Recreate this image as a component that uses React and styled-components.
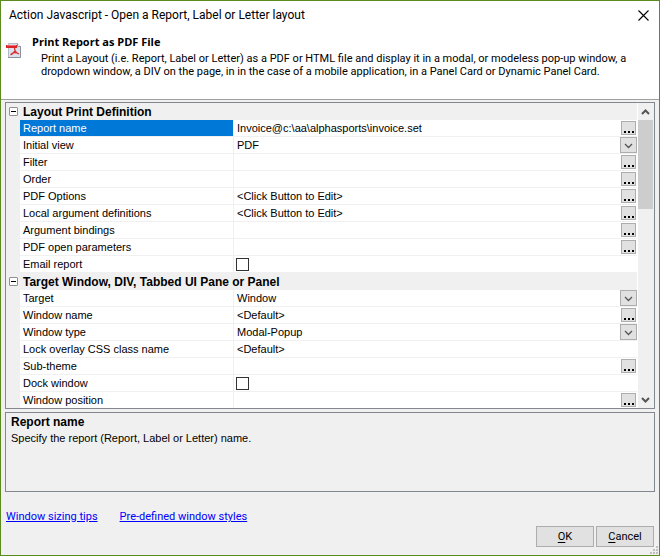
import React, { useState } from "react";
import styled, { createGlobalStyle, css } from "styled-components";

const GlobalStyle = createGlobalStyle`
  * { box-sizing: border-box; }
  body { margin: 0; background: #f0f0f0; }
  button, input, select { font: inherit; color: inherit; margin: 0; }
`;

const uiFont = `Roboto, "Noto Sans", sans-serif`;

const Dialog = styled.main`
  display: flex;
  flex-direction: column;
  height: 100vh;
  border: 1px solid #5b8a1f;
  background: #f0f0f0;
  color: #000;
  font: 11px/13px "Liberation Sans", Arial, sans-serif;
`;

const Header = styled.header`
  height: 99px;
  flex: none;
  background: #fff;
  border-bottom: 1px solid #a0a0a0;
`;

const TitleBar = styled.div`
  display: flex;
  align-items: center;
  justify-content: space-between;
  height: 28px;
  padding: 0 8px;
`;

const Title = styled.h1`
  margin: 0;
  font: 400 12px/16px ${uiFont};
`;

const CloseButton = styled.button`
  display: flex;
  padding: 2px;
  border: 0;
  background: none;
`;

const Intro = styled.div`
  display: flex;
  gap: 10px;
  padding: 6px 5px 0;
`;

const IntroIcon = styled.svg`
  flex: none;
  margin-top: 8px;
`;

const IntroTitle = styled.h2`
  margin: 0;
  font: 700 11px/14px "Open Sans", "Noto Sans", sans-serif;
`;

const IntroText = styled.p`
  margin: 3px 0 0;
  padding-left: 9px;
  font: 11px/13px ${uiFont};
`;

const Body = styled.div`
  display: flex;
  flex-direction: column;
  gap: 3px;
  flex: 1;
  min-height: 0;
  padding: 2px 4px 0;
`;

const GridFrame = styled.section`
  display: flex;
  flex: 1;
  min-height: 0;
  border: 1px solid #828790;
`;

const GridView = styled.div`
  flex: 1;
  min-width: 0;
  overflow: hidden;
`;

const PropertyTable = styled.table`
  width: 100%;
  table-layout: fixed;
  border-collapse: separate;
  border-spacing: 0;
`;

const GutterCol = styled.col` width: 14px; `;
const NameCol = styled.col` width: 214px; `;

const Gutter = styled.td`
  padding: 0;
  text-align: center;
  background: #f0f0f0;
`;

const SectionName = styled.th`
  height: 17px;
  padding: 0 0 0 3px;
  text-align: left;
  font: 700 12px/16px "Liberation Sans", Arial, sans-serif;
`;

const Toggle = styled.button`
  display: block;
  width: 9px;
  height: 9px;
  margin: 0 auto;
  padding: 3px 1px;
  border: 1px solid #919191;
  border-radius: 1px;
  background: #fff;

  &::before {
    content: "";
    display: block;
    height: 1px;
    background: #000;
  }
`;

const NameCell = styled.th`
  height: 17px;
  padding: 0 0 0 3px;
  border-right: 1px solid #f0f0f0;
  border-bottom: 1px solid #f0f0f0;
  text-align: left;
  font-weight: 400;
  line-height: 16px;
  background: ${(p) => (p.$selected ? "#0078d7" : "#fff")};
  color: ${(p) => (p.$selected ? "#fff" : "#000")};
`;

const ValueCell = styled.td`
  height: 17px;
  padding: 0;
  border-bottom: 1px solid #f0f0f0;
  background: #fff;
`;

const ValueRow = styled.div`
  display: flex;
  align-items: center;
  height: 16px;
  padding: 0 ${(p) => (p.$flush ? 0 : 1)}px 0 3px;
`;

const fieldStyle = css`
  flex: 1;
  min-width: 0;
  width: 100%;
  height: 16px;
  padding: 0;
  border: 0;
  border-radius: 0;
  outline: 0;
  background: transparent;
  line-height: 16px;
`;

const TextField = styled.input`${fieldStyle}`;

const SelectField = styled.select`
  ${fieldStyle}
  appearance: none;
`;

const CheckField = styled.input`
  appearance: none;
  width: 13px;
  height: 13px;
  margin: 0 0 0 -1px;
  border: 1px solid #333;
  background: #fff;

  &:checked { background: #333; box-shadow: inset 0 0 0 2px #fff; }
`;

const EllipsisButton = styled.button`
  display: flex;
  align-items: flex-end;
  justify-content: center;
  flex: none;
  width: 15px;
  height: 14px;
  padding: 0;
  border: 1px solid #adadad;
  background: #e1e1e1;
`;

const DropMark = styled.span`
  display: flex;
  align-items: center;
  justify-content: center;
  flex: none;
  width: 17px;
  height: 16px;
  padding-top: 2px;
  border: 1px solid #adadad;
  background: #e1e1e1;
  pointer-events: none;
`;

const ScrollBar = styled.div`
  display: flex;
  flex-direction: column;
  flex: none;
  width: 17px;
  padding: 0 1px 0 0;
  border-left: 1px solid #fff;
  background: #f0f0f0;
`;

const ScrollButton = styled.button`
  display: flex;
  align-items: center;
  justify-content: center;
  height: 17px;
  flex: none;
  padding: 0;
  border: 0;
  background: none;
`;

const ScrollTrack = styled.div` flex: 1; `;

const ScrollThumb = styled.div`
  height: 33%;
  background: #cdcdcd;
`;

const HelpPane = styled.section`
  flex: none;
  height: 80px;
  padding: 2px 5px;
  border: 1px solid #828790;
`;

const HelpTitle = styled.h3`
  margin: 0;
  font: 700 12px/15px "Liberation Sans", Arial, sans-serif;
`;

const HelpText = styled.p`
  margin: 0;
  line-height: 16px;
`;

const Footer = styled.footer`
  flex: none;
  display: flex;
  justify-content: space-between;
  height: 63px;
  padding: 0 5px 8px 5px;
  font: 11px/13px ${uiFont};
`;

const Links = styled.nav`
  display: flex;
  gap: 22px;
  padding-top: 18px;
`;

const Link = styled.a` color: #00f; `;

const Actions = styled.div`
  display: flex;
  align-items: flex-end;
  gap: 2px;
`;

const ActionButton = styled.button`
  width: 58px;
  height: 21px;
  padding: 0;
  border: 1px solid #adadad;
  background: #e1e1e1;

  u { text-underline-offset: 2px; }
`;

const Grip = styled.svg`
  position: absolute;
  right: 2px;
  bottom: 2px;
`;

const sections = [
  {
    name: "Layout Print Definition",
    rows: [
      { name: "Report name", value: "Invoice@c:\\aa\\alphasports\\invoice.set", kind: "edit", selected: true },
      { name: "Initial view", value: "PDF", kind: "select" },
      { name: "Filter", value: "", kind: "edit" },
      { name: "Order", value: "", kind: "edit" },
      { name: "PDF Options", value: "<Click Button to Edit>", kind: "edit" },
      { name: "Local argument definitions", value: "<Click Button to Edit>", kind: "edit" },
      { name: "Argument bindings", value: "", kind: "edit" },
      { name: "PDF open parameters", value: "", kind: "edit" },
      { name: "Email report", kind: "check" },
    ],
  },
  {
    name: "Target Window, DIV, Tabbed UI Pane or Panel",
    rows: [
      { name: "Target", value: "Window", kind: "select" },
      { name: "Window name", value: "<Default>", kind: "edit" },
      { name: "Window type", value: "Modal-Popup", kind: "select" },
      { name: "Lock overlay CSS class name", value: "<Default>", kind: "text" },
      { name: "Sub-theme", value: "", kind: "edit" },
      { name: "Dock window", kind: "check" },
      { name: "Window position", value: "", kind: "edit" },
    ],
  },
];

function Dots() {
  return (
    <svg width="11" height="4" viewBox="0 0 11 4" aria-hidden="true">
      <path d="M1 1h2v2H1zM5 1h2v2H5zM9 1h2v2H9z" fill="#000" />
    </svg>
  );
}

function Chevron({ up, bold }) {
  return (
    <svg width="9" height="6" viewBox="0 0 9 6" aria-hidden="true">
      <path
        d={up ? "M1 5l3.5-3.5L8 5" : "M1 1l3.5 3.5L8 1"}
        fill="none"
        stroke="#555"
        strokeWidth={bold ? 2 : 1.3}
      />
    </svg>
  );
}

function PdfIcon() {
  return (
    <IntroIcon width="16" height="16" viewBox="0 0 16 16" aria-hidden="true">
      <path d="M2.5.5h9l3 3v11h-12z" fill="#dde2ea" stroke="#b4b9c3" />
      <path d="M14.5 3v11.5H2" fill="none" stroke="#8a90a0" />
      <path d="M11.5.5v3h3" fill="#fff" stroke="#9299a6" />
      <path d="M0 2h11v3H0z" fill="#d9252a" />
      <path d="M1 2.5h9" stroke="#ee6a6a" />
      <path
        d="M8.5 5c1 2.500-1 5.500-4 7M8.500 5c0 3 1.500 5 4.500 6M5 11c2-1.500 5-2 8 0"
        fill="none"
        stroke="#d83035"
        strokeWidth="1.3"
      />
    </IntroIcon>
  );
}

function Property({ row }) {
  const id = row.name.toLowerCase().replace(/\W+/g, "-");
  return (
    <tr>
      <Gutter />
      <NameCell scope="row" $selected={row.selected}>
        <label htmlFor={id}>{row.name}</label>
      </NameCell>
      <ValueCell>
        <ValueRow $flush={row.kind === "select"}>
          {row.kind === "check" && <CheckField id={id} type="checkbox" />}
          {(row.kind === "edit" || row.kind === "text") && (
            <TextField id={id} type="text" defaultValue={row.value} />
          )}
          {row.kind === "edit" && (
            <EllipsisButton type="button" aria-label={`Edit ${row.name}`}>
              <Dots />
            </EllipsisButton>
          )}
          {row.kind === "select" && (
            <>
              <SelectField id={id} defaultValue={row.value}>
                <option>{row.value}</option>
              </SelectField>
              <DropMark><Chevron /></DropMark>
            </>
          )}
        </ValueRow>
      </ValueCell>
    </tr>
  );
}

function Section({ section }) {
  const [open, setOpen] = useState(true);
  return (
    <tbody>
      <tr>
        <Gutter>
          <Toggle
            type="button"
            aria-label={`Toggle ${section.name}`}
            aria-expanded={open}
            onClick={() => setOpen(!open)}
          />
        </Gutter>
        <SectionName colSpan={2}>{section.name}</SectionName>
      </tr>
      {open && section.rows.map((row) => <Property key={row.name} row={row} />)}
    </tbody>
  );
}

export default function App() {
  return (
    <>
      <GlobalStyle />
      <Dialog>
        <Header>
          <TitleBar>
            <Title>Action Javascript - Open a Report, Label or Letter layout</Title>
            <CloseButton type="button" aria-label="Close">
              <svg width="11" height="11" viewBox="0 0 11 11" aria-hidden="true">
                <path d="M.5.5l10 10M10.5.5l-10 10" stroke="#000" strokeWidth="1.1" />
              </svg>
            </CloseButton>
          </TitleBar>
          <Intro>
            <PdfIcon />
            <div>
              <IntroTitle>Print Report as PDF File</IntroTitle>
              <IntroText>
                Print a Layout (i.e. Report, Label or Letter) as a PDF or HTML file and display it in a
                modal, or modeless pop-up window, a<br />
                dropdown window, a DIV on the page, in in the case of a mobile application, in a Panel
                Card or Dynamic Panel Card.
              </IntroText>
            </div>
          </Intro>
        </Header>
        <Body>
          <GridFrame>
            <GridView>
              <PropertyTable>
                <colgroup><GutterCol /><NameCol /><col /></colgroup>
                {sections.map((s) => <Section key={s.name} section={s} />)}
              </PropertyTable>
            </GridView>
            <ScrollBar>
              <ScrollButton type="button" aria-label="Scroll up"><Chevron up bold /></ScrollButton>
              <ScrollTrack><ScrollThumb /></ScrollTrack>
              <ScrollButton type="button" aria-label="Scroll down"><Chevron bold /></ScrollButton>
            </ScrollBar>
          </GridFrame>
          <HelpPane>
            <HelpTitle>Report name</HelpTitle>
            <HelpText>Specify the report (Report, Label or Letter) name.</HelpText>
          </HelpPane>
        </Body>
        <Footer>
          <Links>
            <Link href="#sizing">Window sizing tips</Link>
            <Link href="#styles">Pre-defined window styles</Link>
          </Links>
          <Actions>
            <ActionButton type="button"><u>O</u>K</ActionButton>
            <ActionButton type="button"><u>C</u>ancel</ActionButton>
          </Actions>
        </Footer>
        <Grip width="8" height="8" viewBox="0 0 8 8" aria-hidden="true">
          <path d="M6 0h2v2H6zM3 3h2v2H3zM6 3h2v2H6zM0 6h2v2H0zM3 6h2v2H3zM6 6h2v2H6z" fill="#bfbfbf" />
        </Grip>
      </Dialog>
    </>
  );
}
